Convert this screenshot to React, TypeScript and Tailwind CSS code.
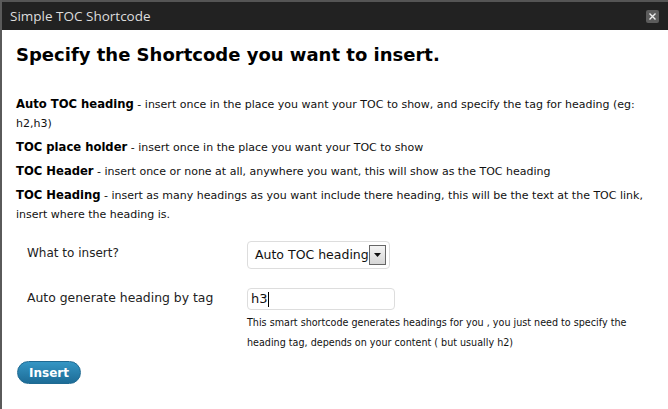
const items = [
  {
    label: "Auto TOC heading",
    text: "insert once in the place you want your TOC to show, and specify the tag for heading (eg: h2,h3)",
  },
  { label: "TOC place holder", text: "insert once in the place you want your TOC to show" },
  { label: "TOC Header", text: "insert once or none at all, anywhere you want, this will show as the TOC heading" },
  {
    label: "TOC Heading",
    text: "insert as many headings as you want include there heading, this will be the text at the TOC link, insert where the heading is.",
  },
];

export default function App() {
  return (
    <div className="w-[668px] h-[409px] overflow-hidden bg-white border-l-2 border-[#5a5a5a] font-['DejaVu_Sans',Verdana,sans-serif] text-[#111]">
      {/* title bar */}
      <div className="h-[30px] bg-[#222] border-t-2 border-[#555] flex items-center justify-between pl-[8px] pr-[9px]">
        <span className="font-['Open_Sans',sans-serif] text-[13.5px] text-[#ddd]">Simple TOC Shortcode</span>
        <span className="w-[13px] h-[13px] bg-[#5c5c5c] rounded-[2px] flex items-center justify-center">
          <svg width="7" height="7" viewBox="0 0 7 7">
            <path d="M0.5 0.5 L6.5 6.5 M6.5 0.5 L0.5 6.5" stroke="#eee" strokeWidth="1.4" />
          </svg>
        </span>
      </div>

      <div className="pl-[14px] pr-[20px]">
        <h1 className="mt-[14px] font-bold text-[18px] leading-[22px] text-black">
          Specify the Shortcode you want to insert.
        </h1>

        <div className="mt-[29px] flex flex-col gap-[5px] w-[632px]">
          {items.map((it) => (
            <p key={it.label} className="text-[11px] leading-[19px]">
              <span className="font-bold text-[11.6px] leading-[19px] text-black">{it.label}</span> - {it.text}
            </p>
          ))}
        </div>

        <div className="mt-[17px] pl-[11px] flex flex-col">
          <div className="flex items-start">
            <span className="w-[220px] pt-[3px] text-[12px] text-[#222]">What to insert?</span>
            <div className="w-[143px] h-[28px] border border-[#ddd] rounded-[4px] flex items-center justify-between pl-[7px] pr-[3px] overflow-hidden">
              <span className="text-[12.5px] whitespace-nowrap">Auto TOC heading</span>
              <span className="shrink-0 w-[17px] h-[20px] border border-[#666] bg-gradient-to-b from-[#f4f4f4] to-[#d6d6d6] flex items-center justify-center">
                <svg width="7" height="4" viewBox="0 0 7 4">
                  <path d="M0 0 H7 L3.5 4 Z" fill="#111" />
                </svg>
              </span>
            </div>
          </div>

          <div className="mt-[19px] flex items-start">
            <span className="w-[220px] pt-[1px] text-[12.4px] text-[#222]">Auto generate heading by tag</span>
            <div>
              <div className="w-[148px] h-[22px] border border-[#ddd] rounded-[4px] flex items-center pl-[3px]">
                <span className="text-[13px]">h3</span>
                <span className="w-px h-[15px] bg-black" />
              </div>
              <p className="mt-[3px] text-[9.6px] leading-[20px] w-[400px]">
                This smart shortcode generates headings for you , you just need to specify the heading tag, depends on your content ( but usually h2)
              </p>
            </div>
          </div>
        </div>

        <button className="block mt-[8px] ml-[1px] w-[64px] h-[23px] rounded-full bg-gradient-to-b from-[#3596c4] to-[#1d6c97] text-white font-bold text-[12px] border border-[#1f6a92]">
          Insert
        </button>
      </div>
    </div>
  );
}
